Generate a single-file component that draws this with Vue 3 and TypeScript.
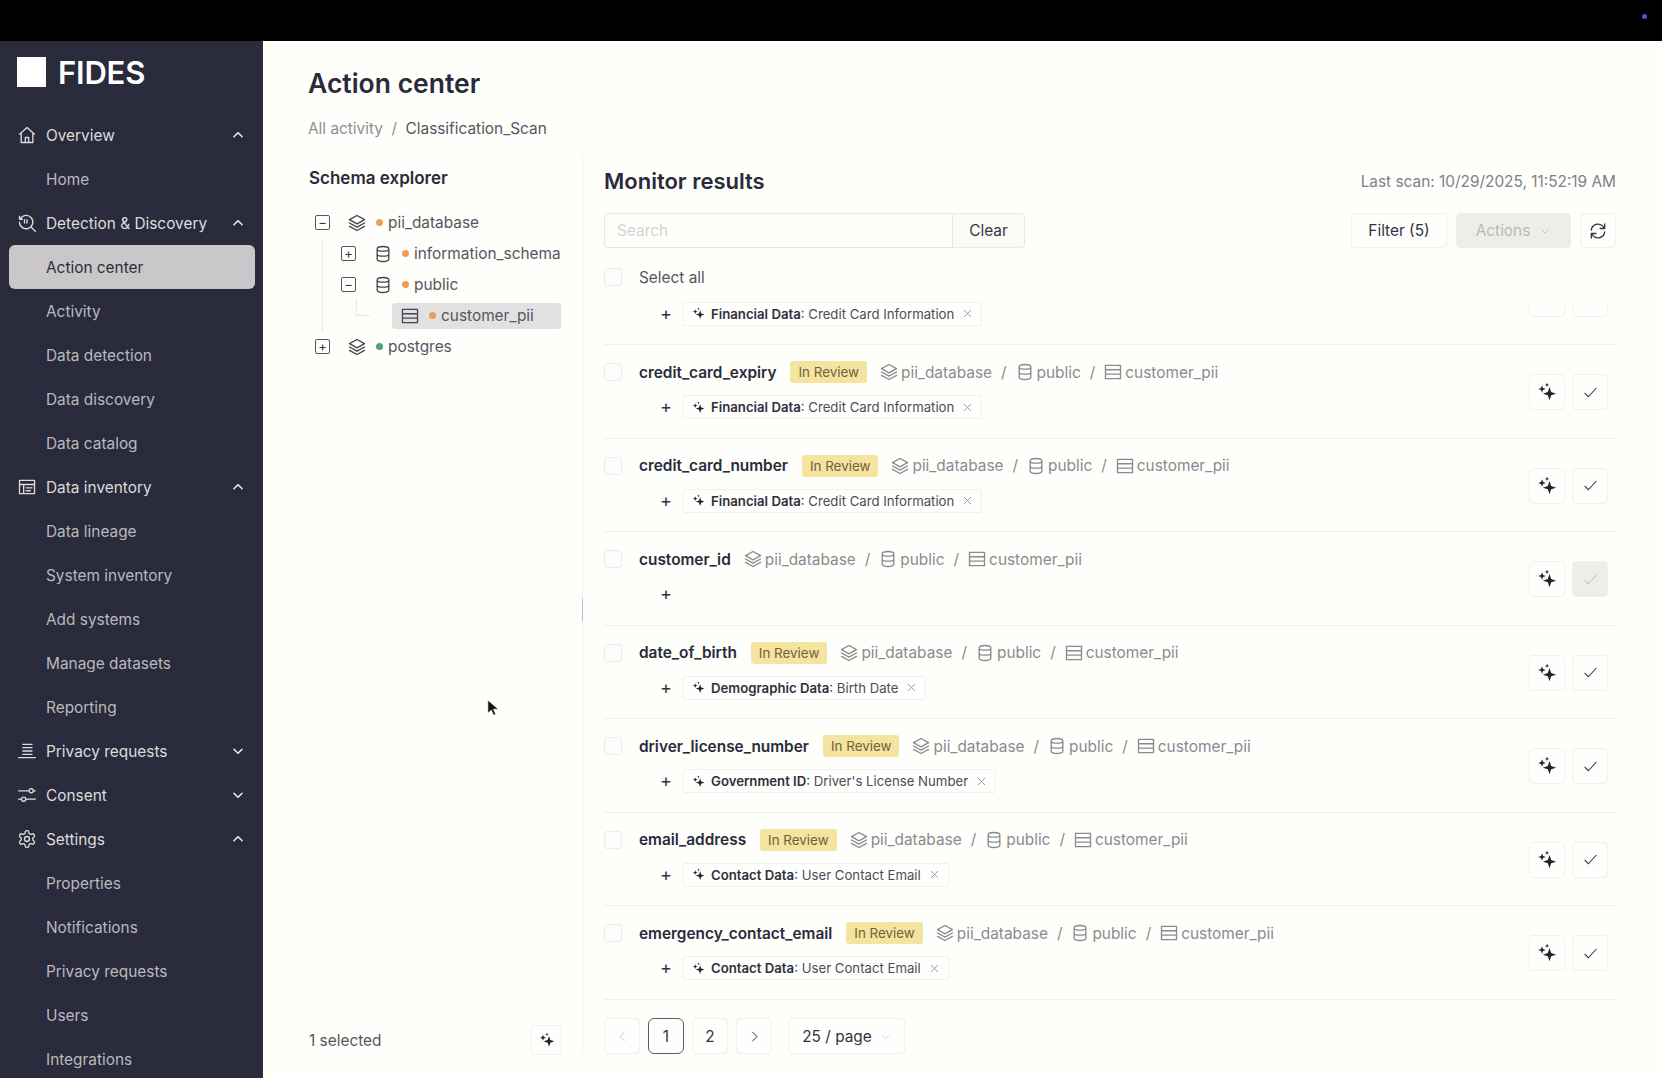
<template>
  <div class="app-root">
    <div class="topbar"><span class="top-dot"></span></div>
    <div class="shell">
      <aside class="sidebar">
        <div class="logo"><span class="logo-mark"></span><span class="logo-text">FIDES</span></div>
        <nav>
          <template v-for="group in nav" :key="group.label">
            <div class="nav-group">
              <svg class="nav-icon" viewBox="0 0 24 24"><path :d="group.icon" /></svg>
              <span>{{ group.label }}</span>
              <svg class="nav-chevron" viewBox="0 0 24 24"><path :d="group.open ? 'M5 15l7-7 7 7' : 'M5 9l7 7 7-7'" /></svg>
            </div>
            <template v-if="group.open">
              <div v-for="item in group.items" :key="item" class="nav-item" :class="{ active: item === 'Action center' }">{{ item }}</div>
            </template>
          </template>
        </nav>
      </aside>

      <main class="main">
        <h1 class="title">Action center</h1>
        <div class="crumbs"><span class="crumb-muted">All activity</span><span class="crumb-sep">/</span><span>Classification_Scan</span></div>

        <div class="columns">
          <section class="explorer">
            <h2 class="explorer-title">Schema explorer</h2>
            <div class="tree">
              <div class="tree-row">
                <span class="toggle">&minus;</span>
                <svg class="tree-icon" viewBox="0 0 24 24"><path :d="icons.layers" /></svg>
                <span class="dot orange"></span>pii_database
              </div>
              <div class="tree-children">
                <div class="tree-row">
                  <span class="toggle">+</span>
                  <svg class="tree-icon" viewBox="0 0 24 24"><path :d="icons.database" /></svg>
                  <span class="dot orange"></span>information_schema
                </div>
                <div class="tree-row">
                  <span class="toggle">&minus;</span>
                  <svg class="tree-icon" viewBox="0 0 24 24"><path :d="icons.database" /></svg>
                  <span class="dot orange"></span>public
                </div>
                <div class="tree-row leaf-row">
                  <span class="elbow"></span>
                  <span class="leaf">
                    <svg class="tree-icon" viewBox="0 0 24 24"><path :d="icons.table" /></svg>
                    <span class="dot orange"></span>customer_pii
                  </span>
                </div>
              </div>
              <div class="tree-row">
                <span class="toggle">+</span>
                <svg class="tree-icon" viewBox="0 0 24 24"><path :d="icons.layers" /></svg>
                <span class="dot green"></span>postgres
              </div>
            </div>
            <div class="explorer-footer">
              <span>1 selected</span>
              <button type="button" class="btn sparkle-small">
                <svg viewBox="0 0 24 24" class="sparkle"><path :d="icons.sparkle" /></svg>
              </button>
            </div>
            <span class="drag-handle"></span>
          </section>

          <section class="results">
            <div class="results-head">
              <h2 class="results-title">Monitor results</h2>
              <span class="last-scan">Last scan: 10/29/2025, 11:52:19 AM</span>
            </div>
            <div class="toolbar">
              <div class="search">
                <span class="search-input">Search</span>
                <button type="button" class="search-clear">Clear</button>
              </div>
              <div class="toolbar-right">
                <button type="button" class="btn filter">Filter (5)</button>
                <button type="button" class="btn actions">
                  Actions
                  <svg viewBox="0 0 24 24"><path d="M5 9l7 7 7-7" /></svg>
                </button>
                <button type="button" class="btn refresh">
                  <svg viewBox="0 0 24 24"><path :d="icons.refresh" /></svg>
                </button>
              </div>
            </div>
            <div class="select-all"><span class="check"></span>Select all</div>

            <div class="list">
              <div class="list-inner">
                <div v-for="(row, index) in rows" :key="index" class="row">
                  <span class="check" :class="{ ghost: !row.name }"></span>
                  <div class="row-body">
                    <div class="row-line">
                      <template v-if="row.name">
                        <span class="row-name">{{ row.name }}</span>
                        <span v-if="row.review" class="badge">In Review</span>
                        <span class="path">
                          <svg viewBox="0 0 24 24"><path :d="icons.layers" /></svg>pii_database
                          <i>/</i>
                          <svg viewBox="0 0 24 24"><path :d="icons.database" /></svg>public
                          <i>/</i>
                          <svg viewBox="0 0 24 24"><path :d="icons.table" /></svg>customer_pii
                        </span>
                      </template>
                    </div>
                    <div class="tag-line">
                      <span class="plus">+</span>
                      <span v-if="row.category" class="tag">
                        <svg viewBox="0 0 24 24" class="sparkle"><path :d="icons.sparkle" /></svg>
                        <span><b>{{ row.category }}</b>: {{ row.value }}</span>
                        <svg viewBox="0 0 24 24" class="tag-x"><path d="M5 5l14 14M19 5L5 19" /></svg>
                      </span>
                    </div>
                  </div>
                  <div class="row-actions">
                    <button type="button" class="btn square">
                      <svg viewBox="0 0 24 24" class="sparkle"><path :d="icons.sparkle" /></svg>
                    </button>
                    <button type="button" class="btn square" :class="{ disabled: row.locked }">
                      <svg viewBox="0 0 24 24" class="tick"><path d="M4 13l5 5L20 6" /></svg>
                    </button>
                  </div>
                </div>
              </div>
            </div>

            <div class="pager">
              <button type="button" class="btn pg muted">
                <svg viewBox="0 0 24 24"><path d="M15 5l-7 7 7 7" /></svg>
              </button>
              <button type="button" class="btn pg current">1</button>
              <button type="button" class="btn pg">2</button>
              <button type="button" class="btn pg">
                <svg viewBox="0 0 24 24"><path d="M9 5l7 7-7 7" /></svg>
              </button>
              <button type="button" class="btn per-page">
                25 / page
                <svg viewBox="0 0 24 24"><path d="M5 9l7 7 7-7" /></svg>
              </button>
            </div>
          </section>
        </div>
        <svg class="cursor" viewBox="0 0 14 20"><path d="M1 1v15l4-3.500 2.600 6 2.600-1.100-2.600-5.900H13z" /></svg>
      </main>
    </div>
  </div>
</template>

<script setup lang="ts">
interface NavGroup {
  label: string;
  icon: string;
  open: boolean;
  items: string[];
}

interface ResultRow {
  name: string;
  review: boolean;
  category?: string;
  value?: string;
  locked?: boolean;
}

const icons = {
  layers: 'M12 3l9 5-9 5-9-5zM3 12l9 5 9-5M3 16l9 5 9-5',
  database: 'M5 6c0-4 14-4 14 0v12c0 4-14 4-14 0zM5 6c0 3.500 14 3.500 14 0M5 12c0 3.500 14 3.500 14 0',
  table: 'M3 4h18v16H3zM3 9.300h18M3 14.600h18',
  sparkle: 'M15 6l2 6 6 2-6 2-2 6-2-6-6-2 6-2zM6 4l1.200 3.300L10.500 8.500 7.200 9.700 6 13l-1.200-3.300L1.500 8.500l3.300-1.200zM12 1l.7 1.800 1.800.7-1.800.7L12 6l-.7-1.800-1.800-.7 1.800-.7z',
  refresh: 'M4 11a8 8 0 0 1 14-4.500L20 9M20 3.500V9h-5.500M20 13a8 8 0 0 1-14 4.500L4 15M4 20.500V15h5.500',
};

const nav: NavGroup[] = [
  { label: 'Overview', icon: 'M3 11l9-8 9 8M5 9.500V21h14V9.500M10 21v-6h4v6', open: true, items: ['Home'] },
  {
    label: 'Detection & Discovery',
    icon: 'M4 7a8 8 0 1 1-1 4M3 4v3.500h3.500M16.500 16.500L22 22M9 8v4M12 8v4',
    open: true,
    items: ['Action center', 'Activity', 'Data detection', 'Data discovery', 'Data catalog'],
  },
  {
    label: 'Data inventory',
    icon: 'M3 4h18v16H3zM3 9h18M8 9v11M11 13h7M11 16.500h5',
    open: true,
    items: ['Data lineage', 'System inventory', 'Add systems', 'Manage datasets', 'Reporting'],
  },
  { label: 'Privacy requests', icon: 'M7 4h11M7 8h11M7 12h11M7 16h11M2 20h20', open: false, items: [] },
  { label: 'Consent', icon: 'M2 7h12M20 7h2M2 17h3M11 17h11M17 4.500a2.500 2.500 0 1 0 0 5 2.500 2.500 0 0 0 0-5zM8 14.500a2.500 2.500 0 1 0 0 5 2.500 2.500 0 0 0 0-5z', open: false, items: [] },
  {
    label: 'Settings',
    icon: 'M12.220 2h-.440a2 2 0 0 0-2 2v.180a2 2 0 0 1-1 1.730l-.430.250a2 2 0 0 1-2 0l-.150-.080a2 2 0 0 0-2.730.730l-.220.380a2 2 0 0 0 .730 2.730l.150.100a2 2 0 0 1 1 1.720v.510a2 2 0 0 1-1 1.740l-.150.090a2 2 0 0 0-.730 2.730l.220.380a2 2 0 0 0 2.730.730l.150-.080a2 2 0 0 1 2 0l.430.250a2 2 0 0 1 1 1.730V20a2 2 0 0 0 2 2h.440a2 2 0 0 0 2-2v-.180a2 2 0 0 1 1-1.730l.430-.250a2 2 0 0 1 2 0l.150.080a2 2 0 0 0 2.730-.730l.220-.390a2 2 0 0 0-.730-2.730l-.150-.080a2 2 0 0 1-1-1.740v-.500a2 2 0 0 1 1-1.740l.150-.090a2 2 0 0 0 .730-2.730l-.220-.380a2 2 0 0 0-2.730-.730l-.150.080a2 2 0 0 1-2 0l-.430-.250a2 2 0 0 1-1-1.730V4a2 2 0 0 0-2-2zM12 9a3 3 0 1 0 0 6 3 3 0 0 0 0-6z',
    open: true,
    items: ['Properties', 'Notifications', 'Privacy requests', 'Users', 'Integrations'],
  },
];

const financial = { category: 'Financial Data', value: 'Credit Card Information' };
const contact = { category: 'Contact Data', value: 'User Contact Email' };

// first entry is the row scrolled under the header, only its tag line is in view
const rows: ResultRow[] = [
  { name: '', review: false, ...financial },
  { name: 'credit_card_expiry', review: true, ...financial },
  { name: 'credit_card_number', review: true, ...financial },
  { name: 'customer_id', review: false, locked: true },
  { name: 'date_of_birth', review: true, category: 'Demographic Data', value: 'Birth Date' },
  { name: 'driver_license_number', review: true, category: 'Government ID', value: "Driver's License Number" },
  { name: 'email_address', review: true, ...contact },
  { name: 'emergency_contact_email', review: true, ...contact },
];
</script>

<style>
html,
body {
  margin: 0;
  background: #000;
}
</style>

<style scoped>
.app-root {
  height: 1078px;
  display: flex;
  flex-direction: column;
  overflow: hidden;
  font-family: Inter, "Noto Sans", sans-serif;
  font-size: 15.4px;
}

.topbar {
  height: 41px;
  flex: none;
  background: #000;
  position: relative;
}

.top-dot {
  position: absolute;
  left: 1642px;
  top: 14px;
  width: 5px;
  height: 5px;
  border-radius: 50%;
  background: #5a4fd6;
}

.shell {
  flex: 1;
  display: flex;
  min-height: 0;
}

svg {
  fill: none;
  stroke: currentColor;
  stroke-width: 1.6;
  stroke-linecap: round;
  stroke-linejoin: round;
}

/* sidebar */
.sidebar {
  width: 263px;
  flex: none;
  background: repeating-conic-gradient(#242532 0 25%, #303144 0 50%) 0 0 / 2px 2px;
  color: #e4e4e6;
  overflow: hidden;
}

.logo {
  height: 72px;
  padding: 0 0 10px 17px;
  box-sizing: border-box;
  display: flex;
  align-items: center;
  gap: 12px;
}

.logo-mark {
  width: 29px;
  height: 30px;
  background: #fff;
}

.logo-text {
  color: #fff;
  font-size: 31px;
  font-weight: 600;
  letter-spacing: -0.2px;
}

.nav-group,
.nav-item {
  height: 44px;
  display: flex;
  align-items: center;
  box-sizing: border-box;
}

.nav-group {
  padding: 0 18px 0 17px;
  color: #dcdcdf;
}

.nav-icon {
  width: 20px;
  height: 20px;
  margin-right: 9px;
  flex: none;
}

.nav-chevron {
  width: 14px;
  height: 14px;
  margin-left: auto;
  stroke-width: 2.6;
  color: #eee;
}

.nav-item {
  padding-left: 46px;
  color: #b9b9bf;
}

.nav-item.active {
  margin: 0 8px 0 9px;
  padding-left: 37px;
  border-radius: 6px;
  background: #c9c7c9;
  color: #2c2d3a;
}

/* main */
.main {
  flex: 1;
  min-width: 0;
  background: #fefefb;
  padding: 0 46px 0 45px;
  position: relative;
  color: #2a2b3a;
}

.title {
  margin: 26px 0 0;
  font-size: 26.5px;
  line-height: 32px;
  font-weight: 600;
}

.crumbs {
  margin-top: 19px;
  height: 22px;
  line-height: 22px;
  display: flex;
  gap: 8.5px;
  color: #55565f;
}

.crumb-muted,
.crumb-sep {
  color: #8d8e95;
}

.columns {
  display: flex;
  margin-top: 15px;
  height: 900px;
}

/* tree */
.explorer {
  width: 275px;
  flex: none;
  border-right: 1px solid #f1f1ee;
  box-sizing: border-box;
  display: flex;
  flex-direction: column;
  position: relative;
}

.explorer-title {
  margin: 12px 0 0 1px;
  font-size: 17px;
  line-height: 22px;
  font-weight: 600;
}

.tree {
  margin-top: 18px;
  color: #55565f;
}

.tree-row {
  height: 31px;
  padding-left: 7px;
  display: flex;
  align-items: center;
  white-space: nowrap;
}

.toggle {
  width: 15px;
  height: 15px;
  flex: none;
  box-sizing: border-box;
  border: 1px solid #55565f;
  border-radius: 2px;
  font-size: 13px;
  line-height: 12px;
  text-align: center;
  color: #33343f;
  margin-right: 17px;
}

.tree-icon {
  width: 20px;
  height: 20px;
  flex: none;
  margin-right: 9px;
  color: #44454f;
}

.dot {
  width: 7px;
  height: 7px;
  border-radius: 50%;
  flex: none;
  margin-right: 5px;
}

.orange {
  background: #e8a15a;
}

.green {
  background: #4f9e7f;
}

.tree-children {
  margin-left: 14px;
  border-left: 1px dotted #d4d4d4;
}

.tree-children .tree-row {
  padding-left: 18px;
}

.tree-children .tree-row.leaf-row {
  padding-left: 33px;
}

.elbow {
  width: 14px;
  height: 16px;
  flex: none;
  margin: -16px 22px 0 0;
  box-sizing: border-box;
  border-left: 1px dotted #d4d4d4;
  border-bottom: 1px dotted #d4d4d4;
}

.leaf {
  height: 26px;
  width: 169px;
  padding-left: 8px;
  box-sizing: border-box;
  display: flex;
  align-items: center;
  background: #e2e1e2;
  border-radius: 4px;
}

.explorer-footer {
  margin-top: auto;
  padding: 0 20px 0 1px;
  display: flex;
  align-items: center;
  justify-content: space-between;
  color: #55565f;
}

.drag-handle {
  position: absolute;
  right: -1px;
  top: 444px;
  height: 22px;
  width: 1px;
  background: #b3bbe0;
}

/* results */
.results {
  flex: 1;
  min-width: 0;
  padding-left: 21px;
  display: flex;
  flex-direction: column;
}

.results-head {
  display: flex;
  align-items: center;
  justify-content: space-between;
  height: 28px;
  margin-top: 12px;
}

.results-title {
  margin: 0;
  font-size: 22px;
  font-weight: 600;
}

.last-scan {
  color: #80818a;
}

.toolbar {
  margin-top: 18px;
  display: flex;
  justify-content: space-between;
}

.search {
  display: flex;
  height: 35px;
  width: 421px;
}

.search-input {
  flex: 1;
  border: 1px solid #ebe9d4;
  border-right: 0;
  border-radius: 4px 0 0 4px;
  color: #d4d4d4;
  line-height: 33px;
  padding-left: 12px;
}

.search-clear {
  width: 73px;
  font: inherit;
  color: #33343f;
  background: #fbfbf5;
  border: 1px solid #ebe9d4;
  border-radius: 0 4px 4px 0;
}

.toolbar-right {
  display: flex;
  gap: 9px;
}

.btn {
  font: inherit;
  color: #33343f;
  background: #fefefd;
  border: 1px solid #f0f0ec;
  border-radius: 4px;
  display: inline-flex;
  align-items: center;
  justify-content: center;
  padding: 0;
  box-sizing: border-box;
}

.filter {
  width: 96px;
  height: 35px;
}

.actions {
  width: 115px;
  height: 35px;
  gap: 9px;
  background: #eeeee8;
  border-color: #eeeee8;
  color: #b9b9ba;
}

.actions svg {
  width: 12px;
  height: 12px;
}

.refresh {
  width: 36px;
  height: 35px;
}

.refresh svg {
  width: 20px;
  height: 20px;
}

.check {
  width: 18px;
  height: 18px;
  flex: none;
  box-sizing: border-box;
  border: 1px solid #ececec;
  border-radius: 3px;
  background: #fdfdfd;
}

.check.ghost {
  visibility: hidden;
}

.select-all {
  height: 22px;
  margin-top: 18px;
  display: flex;
  align-items: center;
  gap: 17px;
  color: #55565f;
}

.list {
  margin-top: 14px;
  height: 698px;
  flex: none;
  overflow: hidden;
}

.list-inner {
  margin-top: -50.5px;
}

.row {
  height: 93.500px;
  box-sizing: border-box;
  padding: 16px 8px 0 0;
  border-bottom: 1px solid #f0f0f4;
  display: flex;
  position: relative;
}

.row > .check {
  margin-top: 2px;
}

.row:first-child .row-actions svg {
  visibility: hidden;
}

.row-body {
  margin-left: 17px;
  flex: 1;
  min-width: 0;
}

.row-line {
  height: 22px;
  display: flex;
  align-items: center;
  white-space: nowrap;
}

.row-name {
  font-weight: 600;
  color: #2a2b3a;
}

.badge {
  margin-left: 14px;
  height: 22px;
  padding: 0 8px;
  border-radius: 3px;
  background: #f5e3a0;
  color: #6f6238;
  font-size: 13.4px;
  line-height: 22px;
}

.path {
  margin-left: 12px;
  display: flex;
  align-items: center;
  color: #8a8b92;
}

.path svg {
  width: 20px;
  height: 20px;
  margin-right: 2px;
}

.path i {
  font-style: normal;
  margin: 0 8px 0 9px;
}

.tag-line {
  margin-top: 12px;
  height: 24px;
  display: flex;
  align-items: center;
}

.plus {
  margin-left: 21px;
  width: 24px;
  font-size: 18px;
  line-height: 24px;
  color: #33343f;
}

.tag {
  height: 24px;
  box-sizing: border-box;
  padding: 0 8px;
  margin-left: -1px;
  display: inline-flex;
  align-items: center;
  gap: 6px;
  border: 1px solid #f0f0f0;
  border-radius: 2px;
  font-size: 13.2px;
  color: #4c4d57;
  background: #fefefc;
}

.tag b {
  font-weight: 600;
  color: #2f303c;
}

.tag .sparkle {
  width: 13px;
  height: 13px;
}

.tag-x {
  width: 11px;
  height: 11px;
  margin-left: 2px;
  color: #77787f;
}

.sparkle {
  fill: currentColor;
  stroke: none;
  color: #22232d;
}

.row-actions {
  position: absolute;
  right: 8px;
  top: 29px;
  display: flex;
  gap: 7px;
}

.square {
  width: 36px;
  height: 36px;
}

.square .sparkle {
  width: 20px;
  height: 20px;
}

.tick {
  width: 17px;
  height: 17px;
  stroke-width: 1.5;
}

.square.disabled {
  background: #eeeee8;
  color: #c2c2c4;
}

.sparkle-small {
  width: 31px;
  height: 30px;
}

.sparkle-small svg {
  width: 16px;
  height: 16px;
}

.pager {
  margin-top: 18px;
  display: flex;
  gap: 8px;
}

.pg {
  width: 36px;
  height: 36px;
}

.pg svg {
  width: 15px;
  height: 15px;
}

.pg.muted {
  color: #c4c4c8;
}

.current {
  border: 1.5px solid #5a5b66;
  border-radius: 6px;
}

.per-page {
  width: 117px;
  height: 36px;
  margin-left: 8px;
  gap: 8px;
}

.per-page svg {
  width: 11px;
  height: 11px;
  color: #c4c4c8;
}

.cursor {
  position: absolute;
  left: 224px;
  top: 658px;
  width: 12px;
  height: 18px;
  fill: #111;
  stroke: #fff;
  stroke-width: 0.8;
}
</style>
